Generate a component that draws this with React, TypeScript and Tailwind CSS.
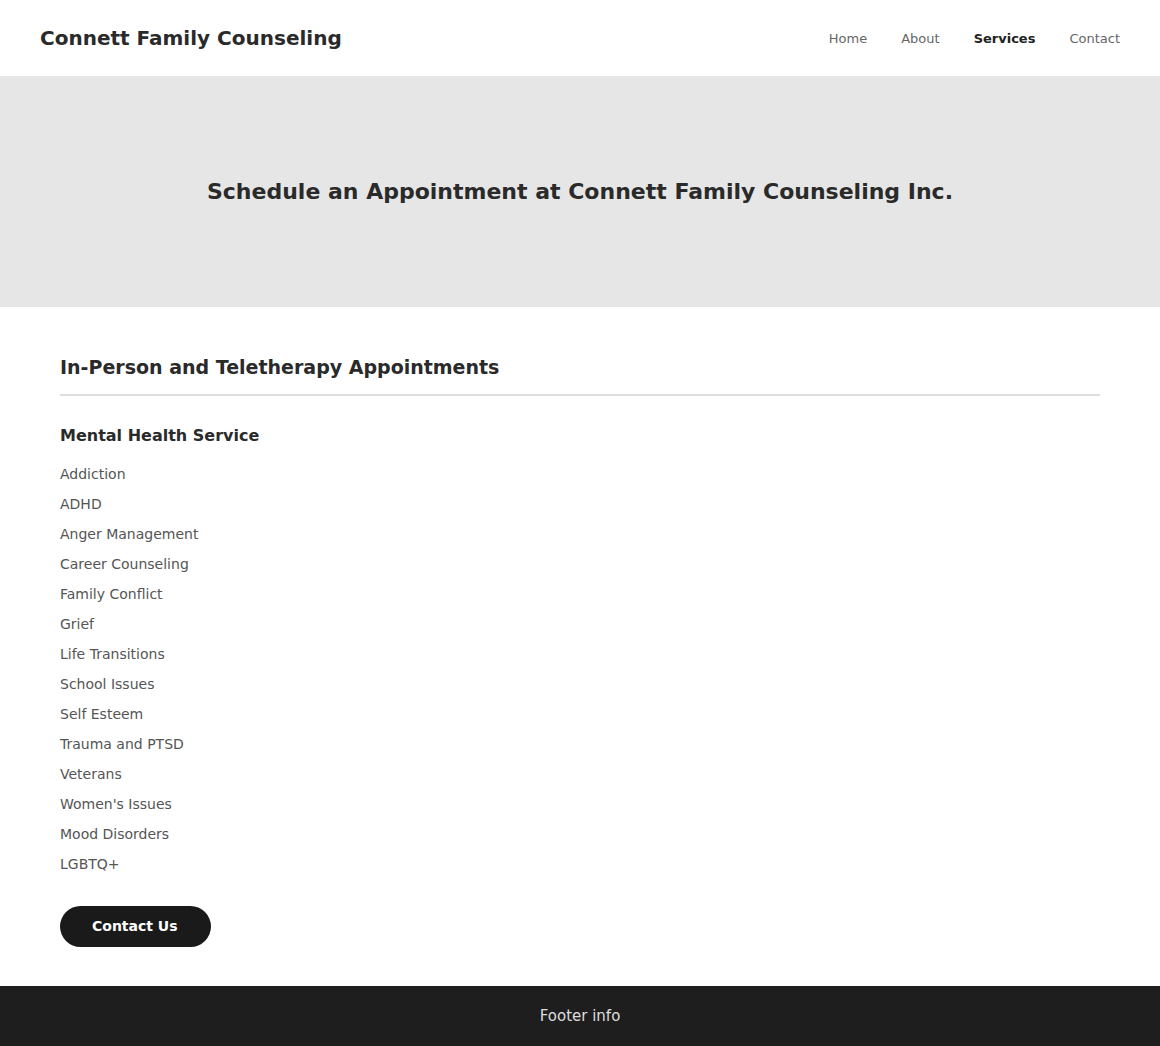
const services = [
  "Addiction",
  "ADHD",
  "Anger Management",
  "Career Counseling",
  "Family Conflict",
  "Grief",
  "Life Transitions",
  "School Issues",
  "Self Esteem",
  "Trauma and PTSD",
  "Veterans",
  "Women's Issues",
  "Mood Disorders",
  "LGBTQ+",
];

const nav = ["Home", "About", "Services", "Contact"];

export default function App() {
  return (
    <div className="min-h-screen bg-white font-['DejaVu_Sans',sans-serif] text-[#222]">
      <header className="flex h-[76px] items-center justify-between px-10">
        <div className="text-[20px] font-bold text-[#2a2a2a]">Connett Family Counseling</div>
        <nav className="flex gap-[34px] pt-[2px] text-[13px]">
          {nav.map((n) => (
            <a
              key={n}
              className={n === "Services" ? "font-bold text-[#222]" : "text-[#666]"}
            >
              {n}
            </a>
          ))}
        </nav>
      </header>

      <section className="flex h-[231px] items-center justify-center bg-[#e6e6e6]">
        <h1 className="text-[22px] font-bold text-[#2a2a2a]">
          Schedule an Appointment at Connett Family Counseling Inc.
        </h1>
      </section>

      <main className="px-[60px] pt-[46px] pb-[39px]">
        <h2 className="pb-[12px] text-[19px] font-bold text-[#2a2a2a]">
          In-Person and Teletherapy Appointments
        </h2>
        <hr className="border-t-2 border-[#ddd]" />
        <h3 className="mt-[28px] text-[16px] font-bold text-[#2a2a2a]">Mental Health Service</h3>
        <ul className="mt-[11px] flex flex-col">
          {services.map((s) => (
            <li key={s} className="h-[30px] text-[14px] leading-[30px] text-[#555]">
              {s}
            </li>
          ))}
        </ul>
        <button className="mt-[27px] h-[41px] rounded-full bg-[#1a1a1a] pr-[33px] pl-8 text-[14px] font-bold text-white">
          Contact Us
        </button>
      </main>

      <footer className="flex h-[60px] items-center justify-center bg-[#1e1e1e] pt-[2px] text-[15px] text-[#ddd]">
        Footer info
      </footer>
    </div>
  );
}
